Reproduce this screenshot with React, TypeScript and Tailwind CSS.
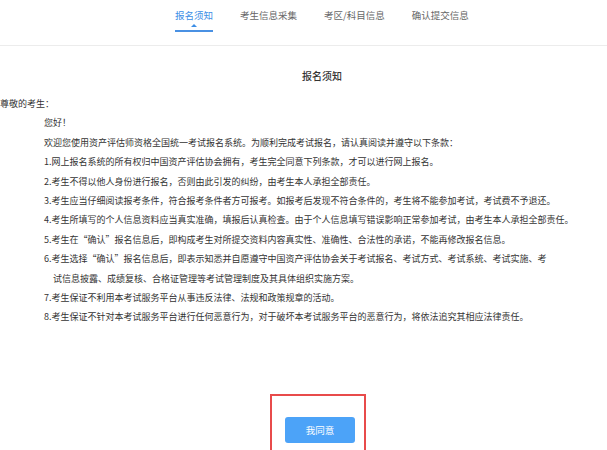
const TABS = ["报名须知", "考生信息采集", "考区/科目信息", "确认提交信息"];

const LINES = [
  "您好！",
  "欢迎您使用资产评估师资格全国统一考试报名系统。为顺利完成考试报名，请认真阅读并遵守以下条款：",
  "1.网上报名系统的所有权归中国资产评估协会拥有，考生完全同意下列条款，才可以进行网上报名。",
  "2.考生不得以他人身份进行报名，否则由此引发的纠纷，由考生本人承担全部责任。",
  "3.考生应当仔细阅读报考条件，符合报考条件者方可报考。如报考后发现不符合条件的，考生将不能参加考试，考试费不予退还。",
  "4.考生所填写的个人信息资料应当真实准确，填报后认真检查。由于个人信息填写错误影响正常参加考试，由考生本人承担全部责任。",
  "5.考生在“确认”报名信息后，即构成考生对所提交资料内容真实性、准确性、合法性的承诺，不能再修改报名信息。",
];

const LINES_AFTER = [
  "7.考生保证不利用本考试服务平台从事违反法律、法规和政策规章的活动。",
  "8.考生保证不针对本考试服务平台进行任何恶意行为，对于破坏本考试服务平台的恶意行为，将依法追究其相应法律责任。",
];

export default function App() {
  return (
    <div
      className="h-[450px] w-[607px] overflow-hidden bg-white text-[#333]"
      style={{ fontFamily: '"Noto Sans CJK SC", "Noto Sans", sans-serif' }}
    >
      <div className="flex h-[46px] gap-[27px] border-b border-[#ececec] pl-[175px]">
        {TABS.map((tab, i) =>
          i === 0 ? (
            <div key={tab} className="flex flex-col items-center pt-[9px]">
              <span className="text-[9.5px] leading-[12px] text-[#3c8ee6]">{tab}</span>
              <span className="mt-[3px] h-0 w-0 border-x-[3px] border-b-[3px] border-x-transparent border-b-[#3c8ee6]" />
              <span className="mt-[3px] h-[2px] w-full bg-[#4a91e3]" />
            </div>
          ) : (
            <div key={tab} className="pt-[9px] text-[9.5px] leading-[12px] text-[#666]">
              {tab}
            </div>
          )
        )}
      </div>

      <div className="mt-[20px] pl-[302px] text-[10px] font-medium leading-[20px] text-[#333]">
        报名须知
      </div>

      <div className="mt-[8px] text-[9px] leading-[19.4px]">
        <p>尊敬的考生：</p>
        <div className="pl-[44px]">
          {LINES.map((line) => (
            <p key={line} className="whitespace-nowrap">
              {line}
            </p>
          ))}
          <p className="whitespace-nowrap">
            6.考生选择“确认”报名信息后，即表示知悉并自愿遵守中国资产评估协会关于考试报名、考试方式、考试系统、考试实施、考
          </p>
          <p className="whitespace-nowrap pl-[9px]">
            试信息披露、成绩复核、合格证管理等考试管理制度及其具体组织实施方案。
          </p>
          {LINES_AFTER.map((line) => (
            <p key={line} className="whitespace-nowrap">
              {line}
            </p>
          ))}
        </div>
      </div>

      <div className="ml-[270px] mt-[67px] h-[80px] w-[96px] border-2 border-[#e84b4b] pl-[13px] pt-[19px]">
        <button
          type="button"
          className="h-[26px] w-[70px] rounded-[3px] bg-[#4ca3f8] text-[9.5px] text-white"
        >
          我同意
        </button>
      </div>
    </div>
  );
}
